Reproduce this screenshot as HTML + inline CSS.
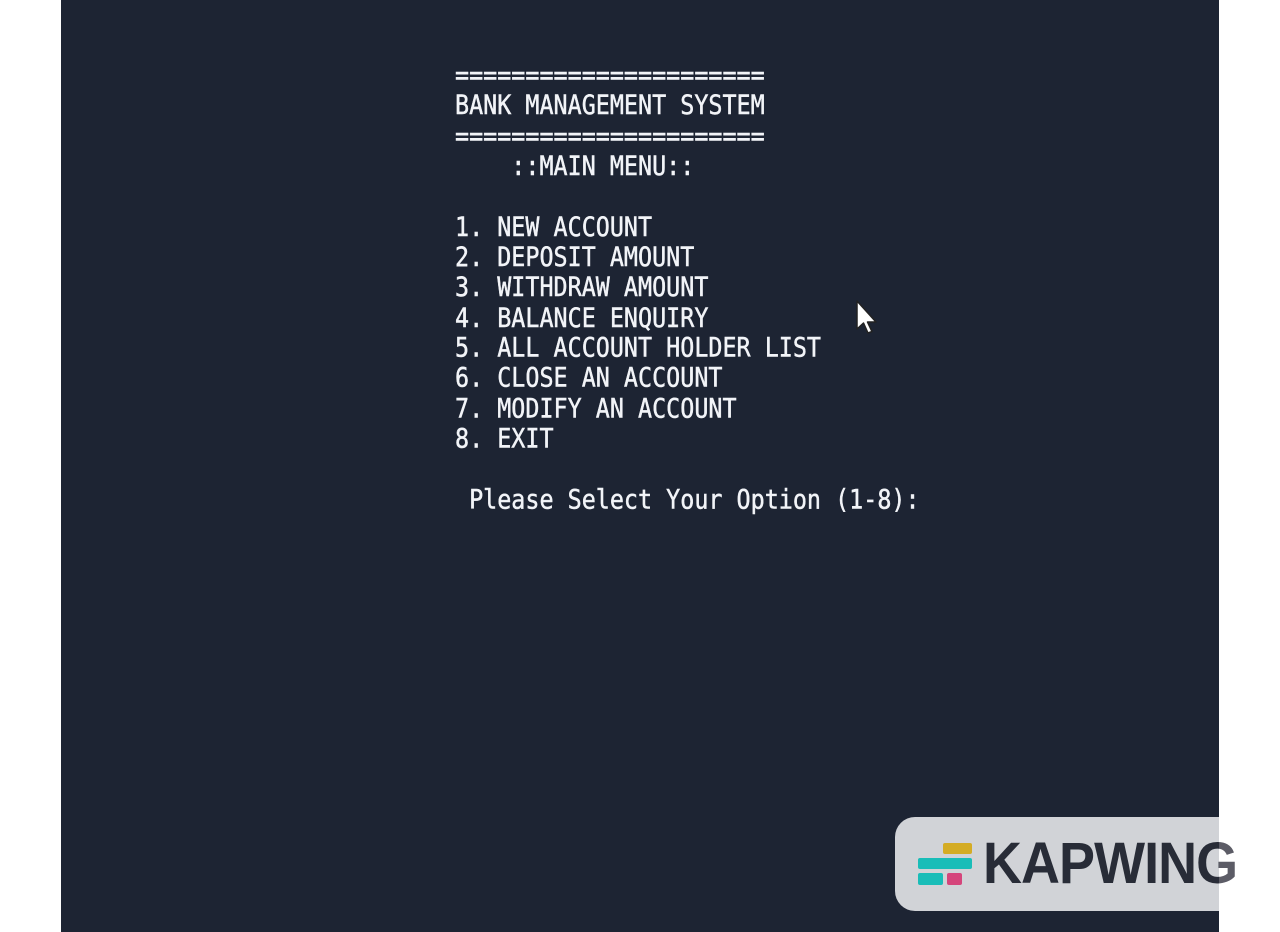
<!DOCTYPE html>
<html><head><meta charset="utf-8"><style>
html,body{margin:0;padding:0;width:1280px;height:932px;background:#fff;overflow:hidden;position:relative}
#term{position:absolute;left:61px;top:0;width:1158px;height:932px;background:#1d2433}
pre{position:absolute;left:455px;top:60px;margin:0;font-family:"DejaVu Sans Mono","Liberation Mono",monospace;font-size:23.5px;line-height:26.35px;color:#f2f4f8;-webkit-text-stroke:0.4px #f2f4f8;transform:scale(0.995,1.15);transform-origin:0 0}
#kw{position:absolute;left:895px;top:817px;width:324px;height:94px;background:#d1d3d7;border-radius:20px 0 0 20px}
.b{position:absolute}
.kt{position:absolute;left:983px;top:831px;font-family:"Liberation Sans",sans-serif;font-weight:bold;font-size:58px;line-height:66px;letter-spacing:-1px;transform:scaleX(0.93);transform-origin:0 0;white-space:nowrap}
.clip{position:absolute;top:0;height:932px;overflow:hidden}
</style></head><body>
<div id="term"></div>
<pre>======================
BANK MANAGEMENT SYSTEM
======================
    ::MAIN MENU::

1. NEW ACCOUNT
2. DEPOSIT AMOUNT
3. WITHDRAW AMOUNT
4. BALANCE ENQUIRY
5. ALL ACCOUNT HOLDER LIST
6. CLOSE AN ACCOUNT
7. MODIFY AN ACCOUNT
8. EXIT

 Please Select Your Option (1-8):</pre>
<svg style="position:absolute;left:855px;top:299px" width="26" height="40" viewBox="0 0 26 40">
<path d="M2 2 L2 30 L8.5 24 L13 34 L17 32.5 L12.5 23 L21 23 Z" fill="#fff" stroke="#222" stroke-width="1.5" stroke-linejoin="round"/>
</svg>
<div id="kw"></div>
<div class="b" style="left:943px;top:843px;width:29px;height:11px;background:#d4ac24;border-radius:2px"></div>
<div class="b" style="left:918px;top:858px;width:54px;height:11px;background:#19bdb8;border-radius:2px"></div>
<div class="b" style="left:918px;top:873px;width:25px;height:12px;background:#19bdb8;border-radius:2px"></div>
<div class="b" style="left:947px;top:873px;width:15px;height:12px;background:#d5457b;border-radius:2px"></div>
<div class="clip" style="left:0;width:1219px"><div class="kt" style="color:#282c37">KAPWING</div></div>
<div class="clip" style="left:1219px;width:61px"><div class="kt" style="color:#5c5c66;left:-236px">KAPWING</div></div>
</body></html>
